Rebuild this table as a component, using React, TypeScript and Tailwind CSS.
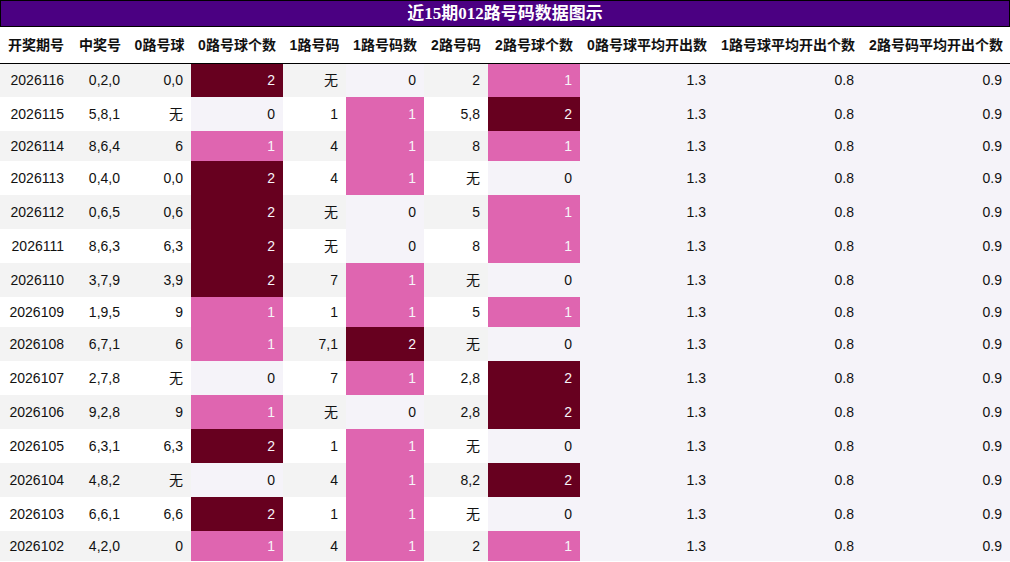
import React from "react";

type Row = {
  issue: string;
  win: string;
  r0: string;
  c0: number;
  r1: string;
  c1: number;
  r2: string;
  c2: number;
};

const headers = [
  "开奖期号",
  "中奖号",
  "0路号球",
  "0路号球个数",
  "1路号码",
  "1路号码数",
  "2路号码",
  "2路号球个数",
  "0路号球平均开出数",
  "1路号球平均开出个数",
  "2路号码平均开出个数",
];

const widths = [72, 56, 63, 92, 63, 78, 64, 92, 134, 148, 148];

const rows: Row[] = [
  { issue: "2026116", win: "0,2,0", r0: "0,0", c0: 2, r1: "无", c1: 0, r2: "2", c2: 1 },
  { issue: "2026115", win: "5,8,1", r0: "无", c0: 0, r1: "1", c1: 1, r2: "5,8", c2: 2 },
  { issue: "2026114", win: "8,6,4", r0: "6", c0: 1, r1: "4", c1: 1, r2: "8", c2: 1 },
  { issue: "2026113", win: "0,4,0", r0: "0,0", c0: 2, r1: "4", c1: 1, r2: "无", c2: 0 },
  { issue: "2026112", win: "0,6,5", r0: "0,6", c0: 2, r1: "无", c1: 0, r2: "5", c2: 1 },
  { issue: "2026111", win: "8,6,3", r0: "6,3", c0: 2, r1: "无", c1: 0, r2: "8", c2: 1 },
  { issue: "2026110", win: "3,7,9", r0: "3,9", c0: 2, r1: "7", c1: 1, r2: "无", c2: 0 },
  { issue: "2026109", win: "1,9,5", r0: "9", c0: 1, r1: "1", c1: 1, r2: "5", c2: 1 },
  { issue: "2026108", win: "6,7,1", r0: "6", c0: 1, r1: "7,1", c1: 2, r2: "无", c2: 0 },
  { issue: "2026107", win: "2,7,8", r0: "无", c0: 0, r1: "7", c1: 1, r2: "2,8", c2: 2 },
  { issue: "2026106", win: "9,2,8", r0: "9", c0: 1, r1: "无", c1: 0, r2: "2,8", c2: 2 },
  { issue: "2026105", win: "6,3,1", r0: "6,3", c0: 2, r1: "1", c1: 1, r2: "无", c2: 0 },
  { issue: "2026104", win: "4,8,2", r0: "无", c0: 0, r1: "4", c1: 1, r2: "8,2", c2: 2 },
  { issue: "2026103", win: "6,6,1", r0: "6,6", c0: 2, r1: "1", c1: 1, r2: "无", c2: 0 },
  { issue: "2026102", win: "4,2,0", r0: "0", c0: 1, r1: "4", c1: 1, r2: "2", c2: 1 },
];

// Heat colours for the count columns (0 / 1 / 2)
const heatClass = (n: number) => {
  if (n === 2) return "bg-[#67001f] text-[#f7f4f9]";
  if (n === 1) return "bg-[#df65b0] text-[#f7f4f9]";
  return "bg-[#f5f3f9] text-[#111]";
};

const Cell = ({ children, className = "" }: { children: React.ReactNode; className?: string }) => (
  <td className={`px-2 text-right align-middle ${className}`}>{children}</td>
);

const App = () => {
  return (
    <div
      className="w-[1010px] h-[562px] bg-white text-[14px] text-[#111] overflow-hidden"
      style={{ fontFamily: '"Liberation Sans", "Noto Sans CJK SC", sans-serif' }}
    >
      <div
        className="h-[27px] border border-black bg-[#4b0082] text-white text-[17px] font-bold flex items-center justify-center leading-none"
        style={{ fontFamily: '"Liberation Serif", "Noto Sans CJK SC", serif' }}
      >
        近15期012路号码数据图示
      </div>
      <table className="table-fixed border-collapse w-[1010px]">
        <colgroup>
          {widths.map((w, i) => (
            <col key={i} style={{ width: w }} />
          ))}
        </colgroup>
        <thead>
          <tr className="h-[36px] border-b border-black">
            {headers.map((h) => (
              <th key={h} className="px-1 pt-[2px] text-center font-bold whitespace-nowrap">
                {h}
              </th>
            ))}
          </tr>
        </thead>
        <tbody>
          {rows.map((r, i) => {
            const tall = [r.r0, r.r1, r.r2].includes("无");
            const stripe = i % 2 === 0 ? "bg-[#f3f3f3]" : "bg-white";
            return (
              <tr key={r.issue} className={tall ? "h-[34px]" : "h-[30px]"}>
                <Cell className={stripe}>{r.issue}</Cell>
                <Cell className={stripe}>{r.win}</Cell>
                <Cell className={stripe}>{r.r0}</Cell>
                <Cell className={heatClass(r.c0)}>{r.c0}</Cell>
                <Cell className={stripe}>{r.r1}</Cell>
                <Cell className={heatClass(r.c1)}>{r.c1}</Cell>
                <Cell className={stripe}>{r.r2}</Cell>
                <Cell className={heatClass(r.c2)}>{r.c2}</Cell>
                <Cell className="bg-[#f5f3f9]">1.3</Cell>
                <Cell className="bg-[#f5f3f9]">0.8</Cell>
                <Cell className="bg-[#f5f3f9]">0.9</Cell>
              </tr>
            );
          })}
        </tbody>
      </table>
    </div>
  );
};

export default App;
